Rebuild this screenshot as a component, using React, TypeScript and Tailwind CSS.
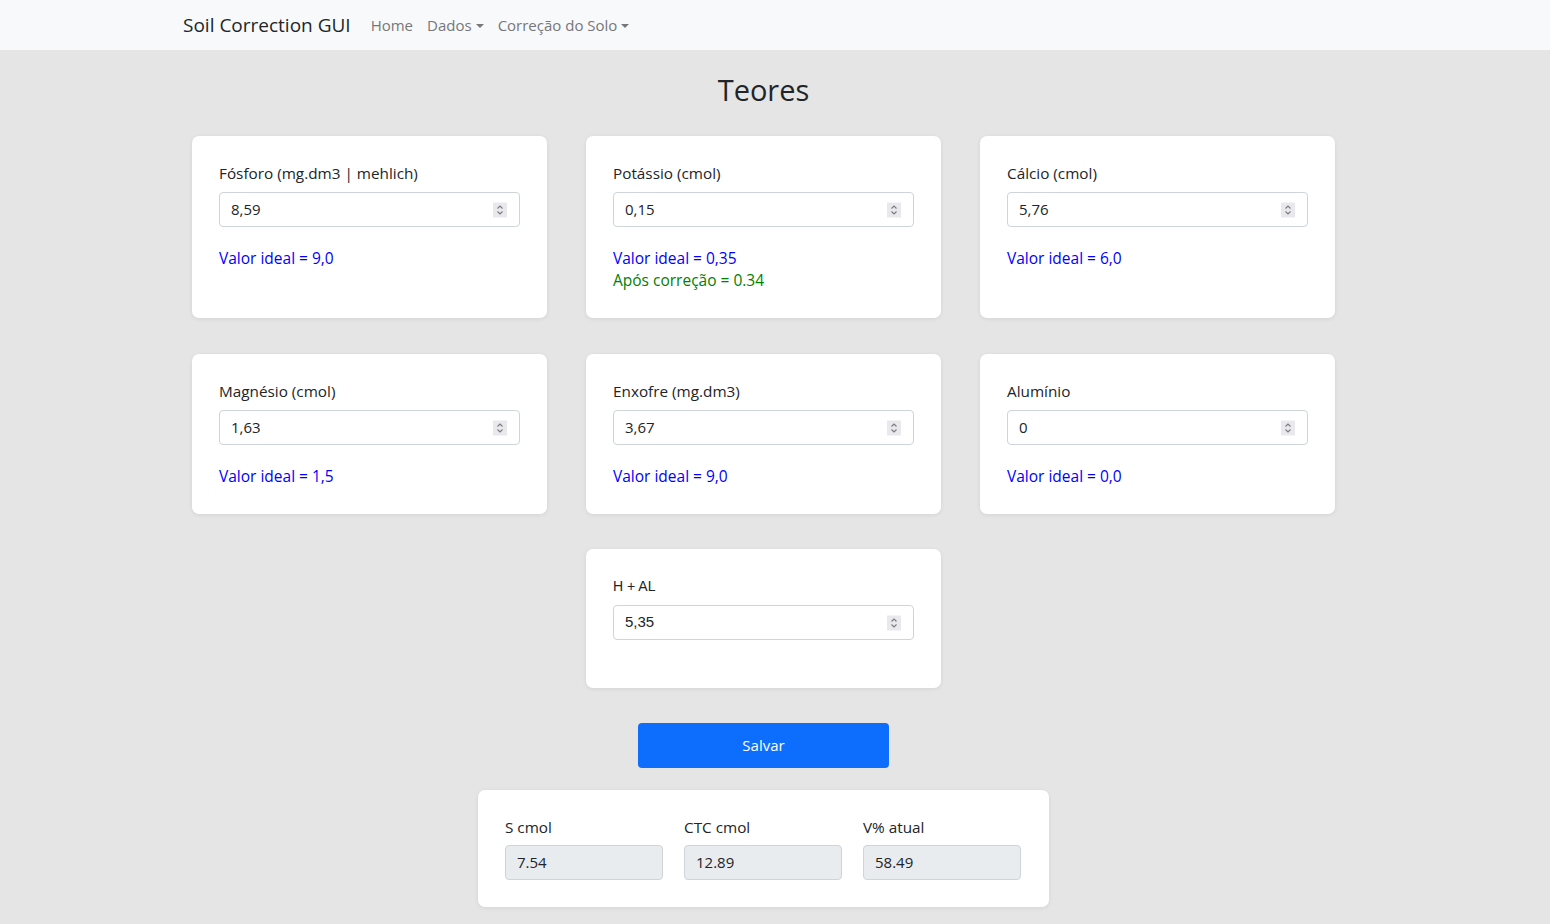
import React from "react";

const font = { fontFamily: '"Open Sans", "Noto Sans", sans-serif' };

function Caret() {
  return (
    <span className="ml-1 inline-block h-0 w-0 border-x-[4px] border-t-[4px] border-x-transparent border-t-current align-[3px]" />
  );
}

function Spinner() {
  return (
    <span className="absolute right-[12px] top-1/2 flex h-[15px] w-[14px] -translate-y-1/2 items-center justify-center bg-[#e9e9ed]">
      <svg width="8" height="11" viewBox="0 0 8 11" fill="none" stroke="#7a7a7f" strokeWidth="1.1">
        <path d="M1.5 4 L4 1.5 L6.5 4" />
        <path d="M1.5 7 L4 9.5 L6.5 7" />
      </svg>
    </span>
  );
}

function NumberField({ value, arial }: { value: string; arial?: boolean }) {
  return (
    <div
      className={`relative flex h-[35px] items-center rounded-[4px] border border-[#ced4da] bg-white px-[11px] text-[15px] text-[#212529] ${
        arial ? "font-['Liberation_Sans',sans-serif]" : ""
      }`}
    >
      {value}
      <Spinner />
    </div>
  );
}

type Teor = {
  label: string;
  value: string;
  ideal?: string;
  after?: string;
};

const teores: Teor[] = [
  { label: "Fósforo (mg.dm3 | mehlich)", value: "8,59", ideal: "9,0" },
  { label: "Potássio (cmol)", value: "0,15", ideal: "0,35", after: "0.34" },
  { label: "Cálcio (cmol)", value: "5,76", ideal: "6,0" },
  { label: "Magnésio (cmol)", value: "1,63", ideal: "1,5" },
  { label: "Enxofre (mg.dm3)", value: "3,67", ideal: "9,0" },
  { label: "Alumínio", value: "0", ideal: "0,0" },
];

function TeorCard({ t }: { t: Teor }) {
  return (
    <div className="rounded-[7px] bg-white px-[27px] pt-[26px] pb-[27px] shadow-[0_1px_4px_rgba(0,0,0,0.08)]">
      <label className="block text-[15.3px] leading-[22px] text-[#212529]">{t.label}</label>
      <div className="mt-2">
        <NumberField value={t.value} />
      </div>
      <p className="mt-[21px] text-[15.5px] leading-[21px] text-[#0000ff]">Valor ideal = {t.ideal}</p>
      {t.after ? (
        <p className="text-[15.5px] leading-[22px] text-[#008000]">Após correção = {t.after}</p>
      ) : null}
    </div>
  );
}

function ResultField({ label, value }: { label: string; value: string }) {
  return (
    <div className="w-[158px]">
      <label className="block text-[15.3px] leading-[22px] text-[#212529]">{label}</label>
      <div className="mt-[7px] flex h-[35px] items-center rounded-[4px] border border-[#ced4da] bg-[#e9ecef] px-[11px] text-[15px] text-[#212529]">
        {value}
      </div>
    </div>
  );
}

export default function App() {
  return (
    <div className="min-h-screen bg-[#e5e5e5]" style={font}>
      <nav className="flex h-[50px] items-center bg-[#f8f9fa] pl-[183px]">
        <span className="mr-[20px] text-[19px] text-[#212529]">Soil Correction GUI</span>
        <div className="flex items-center gap-[14px] text-[15px] text-[#76777a]">
          <span>Home</span>
          <span>
            Dados
            <Caret />
          </span>
          <span>
            Correção do Solo
            <Caret />
          </span>
        </div>
      </nav>

      <main className="flex w-[1527px] flex-col items-center pb-[16px]">
        <h1 className="mt-[22px] text-[29px] font-medium leading-[36px] text-[#212529]">Teores</h1>

        <div className="mt-[28px] grid w-[1143px] grid-cols-3 gap-x-[39px] gap-y-[36px]">
          {teores.map((t) => (
            <TeorCard key={t.label} t={t} />
          ))}
          <div className="col-start-2 -mt-px rounded-[7px] bg-white px-[27px] pt-[26px] pb-[48px] shadow-[0_1px_4px_rgba(0,0,0,0.08)]">
            <label className="block font-['Liberation_Sans',sans-serif] text-[14px] leading-[22px] text-[#212529]">
              H + AL
            </label>
            <div className="mt-2">
              <NumberField value="5,35" arial />
            </div>
          </div>
        </div>

        <button
          type="button"
          className="mt-[35px] h-[45px] w-[251px] rounded-[4px] bg-[#0d6efd] text-[15px] text-white"
        >
          Salvar
        </button>

        <div className="mt-[22px] flex w-[571px] gap-[21px] rounded-[7px] bg-white px-[27px] pt-[26px] pb-[27px] shadow-[0_1px_4px_rgba(0,0,0,0.08)]">
          <ResultField label="S cmol" value="7.54" />
          <ResultField label="CTC cmol" value="12.89" />
          <ResultField label="V% atual" value="58.49" />
        </div>
      </main>
    </div>
  );
}
